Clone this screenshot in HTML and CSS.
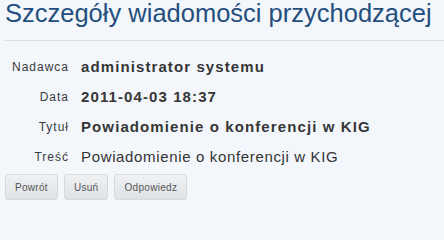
FILE: index.html
```html
<!DOCTYPE html>
<html lang="pl">
<head>
<meta charset="utf-8">
<link rel="stylesheet" href="styles.css">
</head>
<body>
<div class="page">
  <h1 class="title">Szczegóły wiadomości przychodzącej</h1>
  <div class="details">
    <div class="label">Nadawca</div><div class="value strong">administrator systemu</div>
    <div class="label">Data</div><div class="value strong">2011-04-03 18:37</div>
    <div class="label">Tytuł</div><div class="value strong">Powiadomienie o konferencji w KIG</div>
    <div class="label">Treść</div><div class="value">Powiadomienie o konferencji w KIG</div>
  </div>
  <div class="actions">
    <button class="btn">Powrót</button>
    <button class="btn">Usuń</button>
    <button class="btn">Odpowiedz</button>
  </div>
</div>
</body>
</html>
```
FILE: styles.css
```css
html, body {
  margin: 0;
  padding: 0;
  background: #f3f7fc;
}
body {
  font-family: "Liberation Sans", Arial, sans-serif;
  width: 444px;
  height: 204px;
  overflow: hidden;
}
.page {
  padding-left: 5px;
}
.title {
  margin: 0;
  font-size: 25.5px;
  font-weight: normal;
  color: #244f7c;
  line-height: 26px;
  height: 40px;
  border-bottom: 1px solid #d8dde3;
}
.details {
  display: grid;
  grid-template-columns: 64px auto;
  column-gap: 12px;
  padding-top: 11px;
  align-items: center;
}
.label {
  text-align: right;
  font-size: 12px;
  letter-spacing: 1px;
  color: #3a3a3a;
  line-height: 30px;
}
.value {
  font-size: 15px;
  letter-spacing: 0.65px;
  color: #333;
  line-height: 30px;
}
.value.strong {
  font-weight: bold;
  letter-spacing: 1.1px;
  color: #363636;
}
.actions {
  display: flex;
  gap: 6px;
  padding-top: 2px;
}
.btn {
  font-family: "Liberation Sans", Arial, sans-serif;
  font-size: 10px;
  letter-spacing: 0.3px;
  color: #555;
  height: 26px;
  padding: 0 9px;
  border: 1px solid #d6dadd;
  border-radius: 3px;
  background: linear-gradient(#eff1f3, #dfe3e6);
}
```
